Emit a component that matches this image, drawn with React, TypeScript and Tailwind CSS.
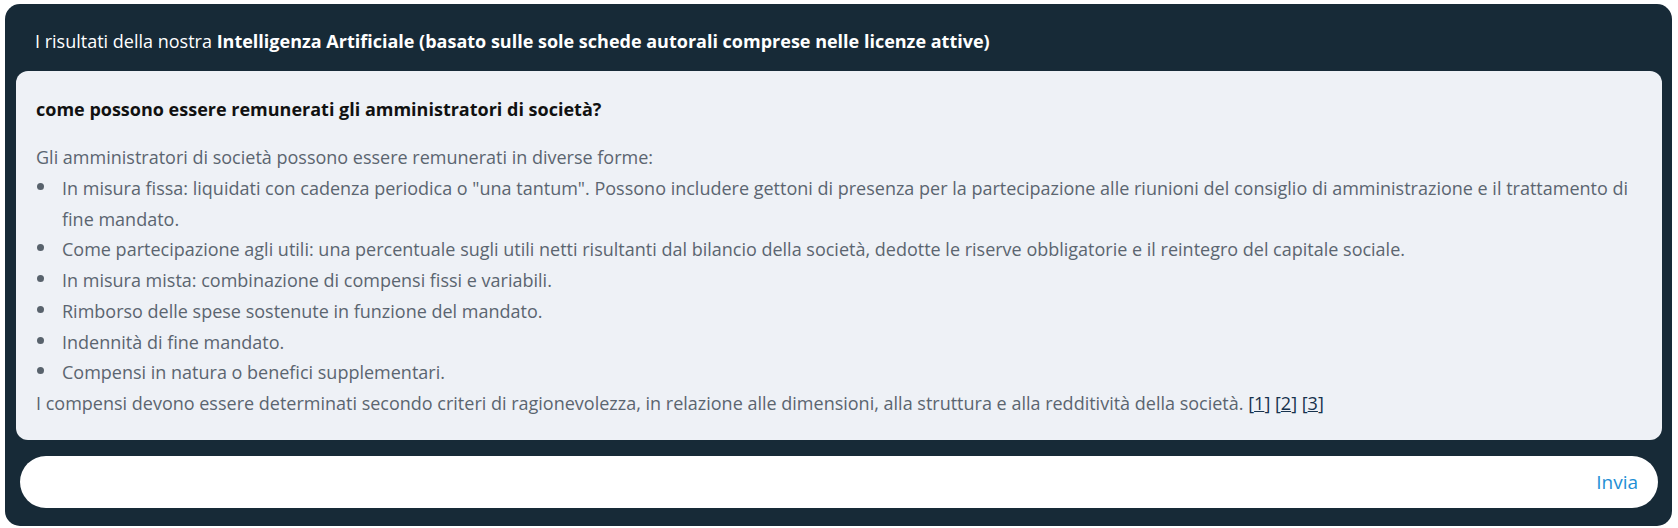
import React from 'react';

const bullets = [
  'In misura fissa: liquidati con cadenza periodica o "una tantum". Possono includere gettoni di presenza per la partecipazione alle riunioni del consiglio di amministrazione e il trattamento di fine mandato.',
  'Come partecipazione agli utili: una percentuale sugli utili netti risultanti dal bilancio della società, dedotte le riserve obbligatorie e il reintegro del capitale sociale.',
  'In misura mista: combinazione di compensi fissi e variabili.',
  'Rimborso delle spese sostenute in funzione del mandato.',
  'Indennità di fine mandato.',
  'Compensi in natura o benefici supplementari.',
];

export default function App() {
  return (
    <div className="min-h-[528px] w-full bg-white pl-[5px] pr-[6px] pt-[4px] pb-[4px] font-['Open_Sans',sans-serif]">
      <div className="flex flex-col rounded-[15px] bg-[#172a37] pb-[18px]">
        <div className="px-[30px] pt-[23px] pb-[16px] text-[18px] leading-[28px] text-white">
          I risultati della nostra{' '}
          <span className="font-bold">
            Intelligenza Artificiale (basato sulle sole schede autorali comprese nelle licenze attive)
          </span>
        </div>

        <div className="ml-[11px] mr-[10px] rounded-[12px] bg-[#eef1f6] px-[20px] pt-[26px] pb-[21px]">
          <p className="text-[18px] font-bold leading-[24px] text-[#111]">
            come possono essere remunerati gli amministratori di società?
          </p>
          <div className="mt-[21px] text-[18px] leading-[30.75px] text-[#5b6570]">
            <p>Gli amministratori di società possono essere remunerati in diverse forme:</p>
            <ul>
              {bullets.map((b) => (
                <li key={b} className="flex">
                  <span className="mt-[10px] ml-[1px] mr-[18px] h-[7px] w-[7px] shrink-0 rounded-full bg-[#58626c]" />
                  <span>{b}</span>
                </li>
              ))}
            </ul>
            <p>
              I compensi devono essere determinati secondo criteri di ragionevolezza, in relazione alle
              dimensioni, alla struttura e alla redditività della società.{' '}
              {['1', '2', '3'].map((n, i) => (
                <React.Fragment key={n}>
                  <a href="#" className="text-[#17324d]">
                    [<span className="underline">{n}</span>]
                  </a>
                  {i < 2 ? ' ' : ''}
                </React.Fragment>
              ))}
            </p>
          </div>
        </div>

        <div className="mt-[16px] ml-[15px] mr-[14px] flex h-[52px] items-center justify-end rounded-full bg-white pr-[20px]">
          <button className="text-[19px] text-[#1e8fd5]">Invia</button>
        </div>
      </div>
    </div>
  );
}
